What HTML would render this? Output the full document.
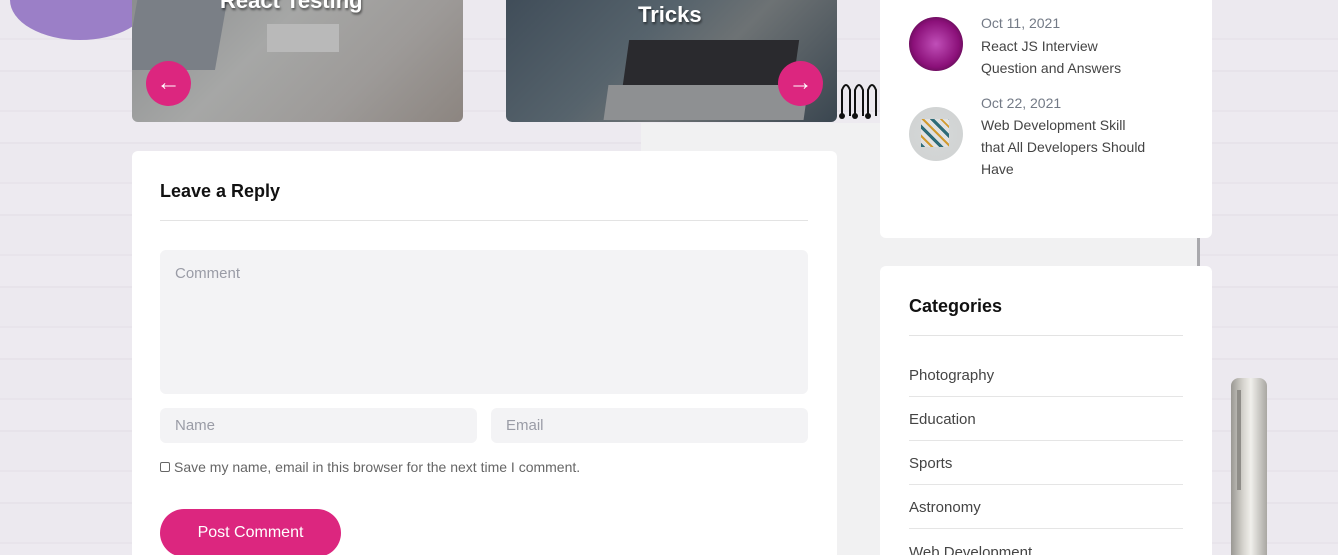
<!DOCTYPE html>
<html><head><style>
*{box-sizing:border-box;margin:0;padding:0}
html,body{width:1338px;height:555px;overflow:hidden}
body{position:relative;font-family:"Liberation Sans",sans-serif;
background:repeating-linear-gradient(180deg,#ece9ef 0 38px,#e8e4eb 38px 40px,#edeaf0 40px 70px,#e7e3ea 70px 72px);}
.paper{position:absolute;left:641px;top:123px;width:556px;height:440px;background:#f1f1f2;box-shadow:3px 0 0 #a9a9ad}
.card{position:absolute;background:#fff;border-radius:6px}
.img{position:absolute;top:-10px;height:132px;border-radius:0 0 6px 6px;overflow:hidden}
.arrow{position:absolute;width:45px;height:45px;border-radius:50%;background:#dc267f;color:#fff;text-align:center;line-height:44px;font-size:24px}
.t{position:absolute;color:#fff;font-weight:bold;font-size:22px;text-shadow:1px 2px 2px rgba(0,0,0,.5)}
.in{position:absolute;background:#f3f3f5;border-radius:6px;color:#9a9ca6;font-size:15px;padding:0 15px}
.cat{position:absolute;left:29px;width:274px;border-bottom:1px solid #e5e5e5;font-size:15px;color:#444;height:44px;line-height:46px}
</style></head><body>
<div style="position:absolute;left:10px;top:-40px;width:140px;height:80px;border-radius:50%;background:#9b7fc7"></div>
<div class="paper"></div>
<div style="position:absolute;left:838px;top:76px;width:50px;height:45px">
<svg width="50" height="45"><g fill="none" stroke="#111" stroke-width="2"><path d="M4 40V14q4-10 8 0V40M17 40V14q4-10 8 0V40M30 40V14q4-10 8 0V40"/></g><g fill="#111"><circle cx="4" cy="40" r="3"/><circle cx="17" cy="40" r="3"/><circle cx="30" cy="40" r="3"/></g></svg></div>
<div class="img" style="left:132px;width:331px;background:linear-gradient(135deg,#8a8c8e,#a6a7a6 40%,#9d9a98 70%,#8c8580)">
<div style="position:absolute;left:0;top:0;width:90px;height:80px;background:#7a7f86;transform:skewX(-10deg)"></div>
<div style="position:absolute;left:135px;top:34px;width:72px;height:28px;background:#b9b9b9"></div>
</div>
<div class="t" style="left:220px;top:-12px">React Testing</div>
<div class="arrow" style="left:146px;top:61px">&#8592;</div>
<div class="img" style="left:506px;width:331px;background:linear-gradient(135deg,#3f4c58,#56636c 40%,#6d7274 60%,#3a4650)">
<div style="position:absolute;left:120px;top:50px;width:170px;height:45px;background:#2a2a2e;transform:skewX(-8deg)"></div>
<div style="position:absolute;left:100px;top:95px;width:200px;height:35px;background:#8e9092;transform:skewX(-8deg)"></div>
</div>
<div class="t" style="left:638px;top:2px">Tricks</div>
<div class="arrow" style="left:778px;top:61px">&#8594;</div>

<div class="card" style="left:132px;top:151px;width:705px;height:420px">
<div style="position:absolute;left:28px;top:30px;font-size:18px;font-weight:bold;color:#111">Leave a Reply</div>
<div style="position:absolute;left:28px;top:69px;width:648px;border-top:1px solid #e3e3e3"></div>
<div class="in" style="left:28px;top:99px;width:648px;height:144px;padding-top:15px">Comment</div>
<div class="in" style="left:28px;top:257px;width:317px;height:35px;line-height:35px">Name</div>
<div class="in" style="left:359px;top:257px;width:317px;height:35px;line-height:35px">Email</div>
<div style="position:absolute;left:28px;top:308px;font-size:14px;color:#666"><span style="display:inline-block;width:10px;height:10px;border:1px solid #666;border-radius:2px;margin-right:4px"></span>Save my name, email in this browser for the next time I comment.</div>
<div style="position:absolute;left:28px;top:358px;width:181px;height:48px;border-radius:24px;background:#dc267f;color:#fff;font-size:16px;text-align:center;line-height:48px">Post Comment</div>
</div>

<div class="card" style="left:880px;top:-10px;width:332px;height:248px">
<div style="position:absolute;left:29px;top:27px;width:54px;height:54px;border-radius:50%;background:radial-gradient(#c04fb8,#8b1079 60%,#2a0a25)"></div>
<div style="position:absolute;left:101px;top:25px;font-size:14px;color:#737a86">Oct 11, 2021</div>
<div style="position:absolute;left:101px;top:45px;font-size:14px;color:#444;line-height:22px;width:210px">React JS Interview<br>Question and Answers</div>
<div style="position:absolute;left:29px;top:117px;width:54px;height:54px;border-radius:50%;background:radial-gradient(#d6d8d8,#cfd2d2);border:0"><div style="margin:12px;width:28px;height:28px;background:repeating-linear-gradient(45deg,#2d6b77 0 3px,#e0e0e0 3px 7px,#d19a2e 7px 9px,#e2e2e2 9px 13px)"></div></div>
<div style="position:absolute;left:101px;top:105px;font-size:14px;color:#737a86">Oct 22, 2021</div>
<div style="position:absolute;left:101px;top:124px;font-size:14px;color:#444;line-height:22px;width:210px">Web Development Skill<br>that All Developers Should<br>Have</div>
</div>

<div class="card" style="left:880px;top:266px;width:332px;height:300px">
<div style="position:absolute;left:29px;top:30px;font-size:18px;font-weight:bold;color:#111">Categories</div>
<div style="position:absolute;left:29px;top:69px;width:274px;border-top:1px solid #e3e3e3"></div>
<div class="cat" style="top:87px">Photography</div>
<div class="cat" style="top:131px">Education</div>
<div class="cat" style="top:175px">Sports</div>
<div class="cat" style="top:219px">Astronomy</div>
<div class="cat" style="top:264px;border:0">Web Development</div>
</div>

<div style="position:absolute;left:1231px;top:378px;width:36px;height:190px;border-radius:8px 8px 0 0;background:linear-gradient(90deg,#9a9893,#d8d6d0 35%,#f0efeb 55%,#a9a7a2)"></div>
<div style="position:absolute;left:1237px;top:390px;width:4px;height:100px;background:#8f8d88"></div>
</body></html>
